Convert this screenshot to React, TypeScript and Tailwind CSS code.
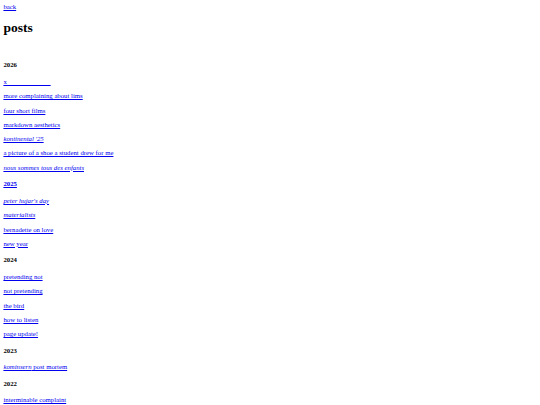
type Part = { text: string; italic?: boolean };
type Post = { parts: Part[] };
type Year = { year: string; link?: boolean; posts: Post[] };

const p = (text: string, italic = false): Post => ({ parts: [{ text, italic }] });

const years: Year[] = [
  {
    year: '2026',
    posts: [
      p('x' + '\u00a0'.repeat(26)),
      p('more complaining about lims'),
      p('four short films'),
      p('markdown aesthetics'),
      p("kontinental '25", true),
      p('a picture of a shoe a student drew for me'),
      p('nous sommes tous des enfants', true),
    ],
  },
  {
    year: '2025',
    link: true,
    posts: [
      p("peter hujar's day", true),
      p('materialists', true),
      p('bernadette on love'),
      p('new year'),
    ],
  },
  {
    year: '2024',
    posts: [
      p('pretending not'),
      p('not pretending'),
      p('the bird'),
      p('how to listen'),
      p('page update!'),
    ],
  },
  {
    year: '2023',
    posts: [{ parts: [{ text: 'kominsern', italic: true }, { text: ' post mortem' }] }],
  },
  {
    year: '2022',
    posts: [p('interminable complaint')],
  },
];

const link = 'text-[#0000ee] underline';

export default function App() {
  return (
    <div className="min-h-screen bg-white px-[3.4px] pt-[3.4px] font-['Liberation_Serif',serif] text-[6.75px] leading-[7.6px] text-black">
      <a href="#" className={link}>
        back
      </a>
      <h1 className="mt-[9px] text-[13.5px] font-bold leading-[15.5px]">posts</h1>

      <div className="mt-[26px] flex flex-col">
        {years.map((y, i) => (
          <section key={y.year} className={i > 0 ? 'mt-[9px]' : ''}>
            <h4 className="font-bold">
              {y.link ? (
                <a href="#" className={link}>
                  {y.year}
                </a>
              ) : (
                y.year
              )}
            </h4>
            <ul className="mt-[9px] flex flex-col gap-[6.7px]">
              {y.posts.map((post, j) => (
                <li key={j}>
                  <a href="#" className={link}>
                    {post.parts.map((part, k) =>
                      part.italic ? (
                        <em key={k}>{part.text}</em>
                      ) : (
                        <span key={k} className="whitespace-pre">
                          {part.text}
                        </span>
                      )
                    )}
                  </a>
                </li>
              ))}
            </ul>
          </section>
        ))}
      </div>
    </div>
  );
}
